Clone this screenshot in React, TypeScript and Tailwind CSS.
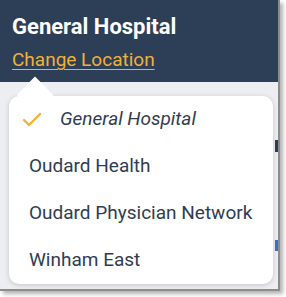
import { Check } from "lucide-react";

const locations = [
  { id: 1, name: "General Hospital", selected: true },
  { id: 2, name: "Oudard Health", selected: false },
  { id: 3, name: "Oudard Physician Network", selected: false },
  { id: 4, name: "Winham East", selected: false },
];

const App = () => {
  return (
    <div
      className="w-[286px] h-[297px] bg-white"
      style={{ fontFamily: "Roboto, 'Liberation Sans', sans-serif" }}
    >
      <div className="w-[280px] h-[291px] flex flex-col overflow-hidden bg-[#eceef1] border-r-2 border-b-2 border-[#8c8c8c] shadow-[3px_3px_4px_rgba(0,0,0,0.3)]">
        {/* Header */}
        <div className="h-[82px] shrink-0 bg-[#2d3e57] px-3 pt-[13px]">
          <h1 className="text-[22px] leading-7 font-bold text-white">General Hospital</h1>
          <a className="block mt-[7px] text-[19px] leading-6 text-[#f0b03c] underline underline-offset-[3px] decoration-1">
            Change Location
          </a>
        </div>

        {/* Dropdown area */}
        <div className="relative flex-1 pl-[9px] pr-[5px] pt-[14px]">
          {/* bits of the page underneath */}
          <div className="absolute right-0 top-[58px] w-[3px] h-[12px] bg-[#2d3e57]" />
          <div className="absolute right-0 top-[158px] w-[3px] h-[11px] bg-[#3a6fd0]" />

          <div className="relative bg-white rounded-[10px] shadow-[0_1px_5px_rgba(0,0,0,0.18)]">
            {/* caret */}
            <div className="absolute left-[13px] top-[-14px] w-[26px] h-[26px] rotate-45 bg-white" />
            {locations.map((loc) =>
              loc.selected ? (
                <div key={loc.id} className="relative h-[47px] flex items-center pl-[11px]">
                  <Check size={24} strokeWidth={2.3} className="text-[#f5b02e]" />
                  <span className="ml-4 text-[19px] italic text-[#2f3d52]">{loc.name}</span>
                </div>
              ) : (
                <div key={loc.id} className="relative h-[47px] flex items-center pl-5">
                  <span className="text-[19px] text-[#2f3d52]">{loc.name}</span>
                </div>
              )
            )}
          </div>
        </div>
      </div>
    </div>
  );
};

export default App;
